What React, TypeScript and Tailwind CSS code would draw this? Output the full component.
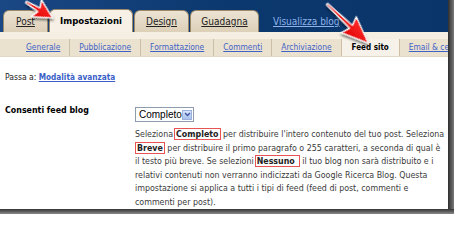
import React from "react";

function Arrow({ x, y, angle, L, h, w, s }: { x: number; y: number; angle: number; L: number; h: number; w: number; s: number }) {
  const pts = [
    [0, -0.8],
    [L - h, -s],
    [L - h - 3, -w],
    [L, 0],
    [L - h - 3, w],
    [L - h, s],
    [0, 0.8],
  ]
    .map((p) => p.join(","))
    .join(" ");
  return (
    <g transform={`translate(${x} ${y}) rotate(${angle})`} filter="url(#sh)">
      <polygon points={pts} fill="url(#rg)" stroke="#ffffff" strokeWidth="1.3" strokeLinejoin="round" />
    </g>
  );
}

export default function App() {
  const tabBase =
    "shrink-0 ml-[1px] h-[22px] rounded-t-[6px] border border-b-0 border-[#9c896a] bg-gradient-to-b from-[#ece3d3] to-[#ddd0b9] flex items-center justify-center text-[10px] text-[#222] underline";
  const sub =
    "shrink-0 whitespace-nowrap h-full px-[9px] flex items-center border-r border-[#cdbfa6] text-[8.4px] text-[#3e63c6] underline";
  return (
    <div className="relative w-[454px] h-[214px] bg-white overflow-hidden font-['DejaVu_Sans_Condensed','DejaVu_Sans',sans-serif]">
      <div className="flex">
        <div className="w-[448px] h-[209px] bg-white flex flex-col overflow-hidden">
          {/* header */}
          <div className="h-[32px] shrink-0 bg-gradient-to-r from-[#1a4885] via-[#0b386e] to-[#0a356b] flex items-end">
            <div className={`${tabBase} ml-[3px] w-[45px]`}>Post</div>
            <div className="shrink-0 ml-[1px] w-[84px] h-[23px] rounded-t-[6px] border border-b-0 border-[#9c896a] bg-[#f6f0e6] flex items-center justify-center text-[9.5px] font-bold text-black">
              Impostazioni
            </div>
            <div className={`${tabBase} w-[55px]`}>Design</div>
            <div className={`${tabBase} w-[69px]`}>Guadagna</div>
            <div className="shrink-0 ml-[14px] h-[22px] flex items-center text-[10px] text-[#8fb3ea] underline">Visualizza blog</div>
          </div>
          <div className="h-[7px] shrink-0 bg-[#f4eee3]" />
          <div className="h-[18px] shrink-0 bg-[#ebe1cf] flex pl-[17px] border-b border-[#e2d8c6] overflow-hidden">
            <div className={sub}>Generale</div>
            <div className={sub}>Pubblicazione</div>
            <div className={sub}>Formattazione</div>
            <div className={sub}>Commenti</div>
            <div className={sub}>Archiviazione</div>
            <div className="shrink-0 whitespace-nowrap h-full px-[10px] flex items-center border-r border-[#cdbfa6] bg-[#f7f2e9] text-[8px] font-bold text-black">
              Feed sito
            </div>
            <div className={`${sub} border-r-0`}>Email &amp; cel</div>
          </div>
          {/* body */}
          <div className="pl-[5px] pt-[14px]">
            <div className="h-[12px] leading-[12px] text-[8.5px] text-[#222]">
              Passa a: <span className="font-bold text-[8.2px] text-[#3b5fc7] underline">Modalità avanzata</span>
            </div>
            <div className="mt-[21px] flex">
              <div className="w-[130px] shrink-0 h-[12px] leading-[12px] text-[8.8px] font-bold text-black">Consenti feed blog</div>
              <div className="flex flex-col">
                <div className="mt-[3px] w-[59px] h-[15px] border border-[#8e9cae] bg-white flex items-center justify-between pl-[3px] pr-[1px]">
                  <span className="font-['Liberation_Sans',sans-serif] text-[10px] text-black leading-none">Completo</span>
                  <div className="w-[10px] h-[10px] shrink-0 border border-[#9cb2dc] bg-gradient-to-b from-[#d8e4fa] to-[#a9c0ec] flex items-center justify-center">
                    <svg width="7" height="5" viewBox="0 0 7 5">
                      <path d="M1 1 L3.5 3.5 L6 1" stroke="#3c55a0" strokeWidth="1.4" fill="none" />
                    </svg>
                  </div>
                </div>
                <div className="mt-[6px] text-[8.8px] leading-[13.6px] text-[#3a3a3a] whitespace-nowrap">
                  <div>
                    Seleziona<span className="ml-[1px] px-[1px] border border-[#e85454] font-bold text-[#222]">Completo</span> per distribuire l'intero contenuto del tuo post. Seleziona
                  </div>
                  <div>
                    <span className="px-[1px] border border-[#e85454] font-bold text-[#222]">Breve</span> per distribuire il primo paragrafo o 255 caratteri, a seconda di qual è
                  </div>
                  <div>
                    il testo più breve. Se selezioni<span className="ml-[1px] pl-[1px] pr-[4px] border border-[#e85454] font-bold text-[#222]">Nessuno</span> il tuo blog non sarà distribuito e i
                  </div>
                  <div>relativi contenuti non verranno indicizzati da Google Ricerca Blog. Questa</div>
                  <div>impostazione si applica a tutti i tipi di feed (feed di post, commenti e</div>
                  <div>commenti per post).</div>
                </div>
              </div>
            </div>
          </div>
        </div>
        <div className="w-[6px] h-[209px] bg-gradient-to-r from-[#2f2f2f] to-[#7a7a7a]" />
      </div>
      <div className="h-[5px] bg-gradient-to-b from-[#353535] to-[#8a8a8a]" />

      <svg className="absolute left-0 top-0 pointer-events-none" width="454" height="214">
        <defs>
          <linearGradient id="rg" x1="0" y1="0" x2="0" y2="1">
            <stop offset="0" stopColor="#ff3030" />
            <stop offset="1" stopColor="#e00000" />
          </linearGradient>
          <filter id="sh" x="-30%" y="-30%" width="160%" height="160%">
            <feDropShadow dx="1.5" dy="1.5" stdDeviation="1" floodColor="#000" floodOpacity="0.55" />
          </filter>
        </defs>
        <Arrow x={26} y={2} angle={31} L={31} h={16} w={10} s={2.2} />
        <Arrow x={327} y={4} angle={43.5} L={57} h={24} w={11} s={2.2} />
      </svg>
    </div>
  );
}
